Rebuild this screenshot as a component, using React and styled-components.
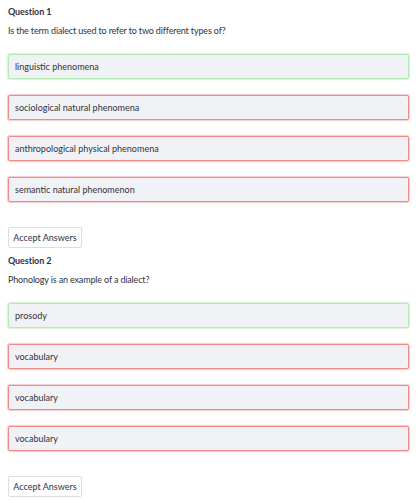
import React from "react";
import styled, { createGlobalStyle } from "styled-components";

const GlobalStyle = createGlobalStyle`
  body {
    margin: 0;
    background: #ffffff;
    font-family: "Lato", "Liberation Sans", sans-serif;
    color: #31333f;
  }
`;

const quiz = [
  {
    title: "Question 1",
    prompt: "Is the term dialect used to refer to two different types of?",
    options: [
      { text: "linguistic phenomena", correct: true },
      { text: "sociological natural phenomena", correct: false },
      { text: "anthropological physical phenomena", correct: false },
      { text: "semantic natural phenomenon", correct: false },
    ],
  },
  {
    title: "Question 2",
    prompt: "Phonology is an example of a dialect?",
    options: [
      { text: "prosody", correct: true },
      { text: "vocabulary", correct: false },
      { text: "vocabulary", correct: false },
      { text: "vocabulary", correct: false },
    ],
  },
];

export default function App() {
  return (
    <>
      <GlobalStyle />
      <Page>
        {quiz.map((q, i) => (
          <Question key={i}>
            <Title>{q.title}</Title>
            <Prompt>{q.prompt}</Prompt>
            <Options>
              {q.options.map((o, j) => (
                <Option key={j} $correct={o.correct}>
                  {o.text}
                </Option>
              ))}
            </Options>
            <AcceptButton>Accept Answers</AcceptButton>
          </Question>
        ))}
      </Page>
    </>
  );
}

const Page = styled.div`
  padding: 4px 9px 0 8px;
  display: flex;
  flex-direction: column;
  gap: 5px;
`;

const Question = styled.section`
  display: flex;
  flex-direction: column;
`;

const Title = styled.div`
  font-size: 9px;
  font-weight: 700;
  line-height: 15px;
  height: 14px;
  letter-spacing: -0.1px;
`;

const Prompt = styled.div`
  margin-top: 6px;
  font-size: 9px;
  line-height: 14px;
  height: 14px;
  letter-spacing: -0.15px;
`;

const Options = styled.div`
  margin-top: 16px;
  display: flex;
  flex-direction: column;
  gap: 16px;
`;

const Option = styled.div`
  box-sizing: border-box;
  height: 25px;
  display: flex;
  align-items: center;
  padding: 0 6px;
  background: #f0f2f6;
  border-radius: 2px;
  font-size: 9px;
  border: 1px solid ${(p) => (p.$correct ? "#b5eab5" : "#ef8a8a")};
  box-shadow: 0 0 1px 1px
    ${(p) => (p.$correct ? "rgba(190, 236, 190, 0.6)" : "rgba(240, 170, 170, 0.6)")};
`;

const AcceptButton = styled.button`
  align-self: flex-start;
  margin-top: 25px;
  box-sizing: border-box;
  width: 74px;
  height: 21px;
  padding: 0;
  background: #ffffff;
  border: 1px solid #dcdde2;
  border-radius: 2px;
  font-family: inherit;
  font-size: 9px;
  color: #31333f;
`;
